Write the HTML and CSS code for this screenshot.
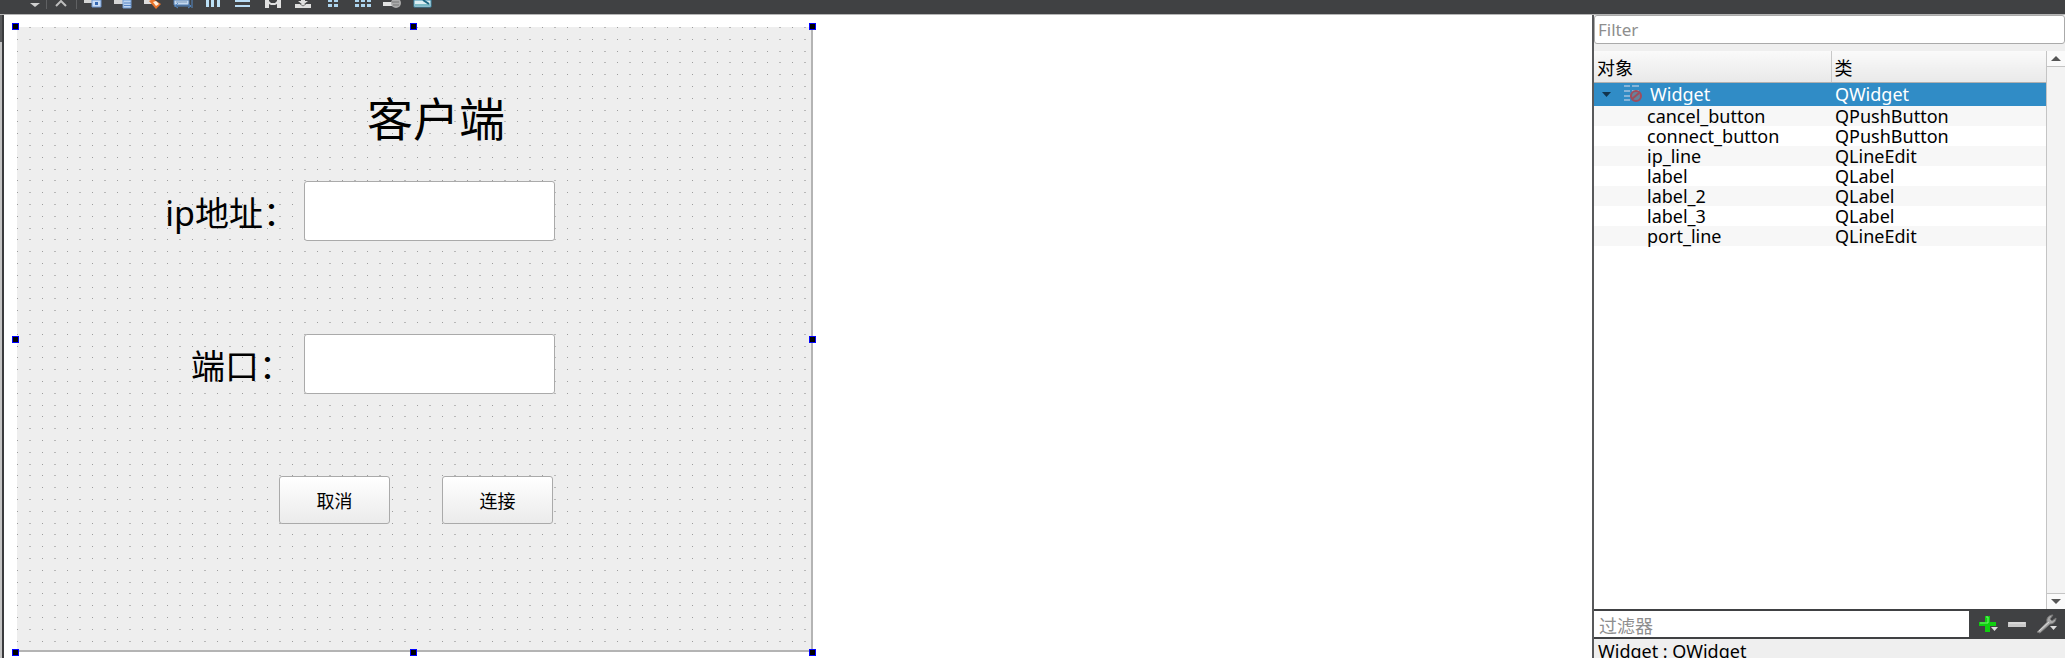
FILE: index.html
```html
<!DOCTYPE html>
<html lang="zh-CN">
<head>
<meta charset="utf-8">
<title>Widget</title>
<link rel="stylesheet" href="styles.css">
</head>
<body>
<header class="toolbar">
  <svg class="toolbar-icons" width="440" height="14" viewBox="0 0 440 14" aria-hidden="true">
    <path d="M30 3h10l-5 4z" fill="#d0d0d0"/>
    <path d="M46.500 0v9M76.500 0v9" stroke="#606163"/>
    <path d="M56 6l5-5 5 5" fill="none" stroke="#bdbdbd" stroke-width="2"/>
    <path d="M84 0h8v3h-8z" fill="#d5d5d5"/><path d="M92 0h9v7h-9z" fill="#c8dcf5" stroke="#6b93cd"/><path d="M95 2h3v3h-3z" fill="#3467b1"/>
    <path d="M114 0h9v4h-9z" fill="#d5d5d5"/><path d="M123 0h8v8h-8z" fill="#bdd4f0" stroke="#6f9bd4"/><path d="M124 3h7M124 5.500h7" stroke="#5684c4"/>
    <path d="M144 0h8v4h-8z" fill="#ddd"/><path d="M149 1l4-2 8 5-5 5z" fill="#e9742c"/><path d="M153 2l3-1 3 3-3 2z" fill="#fff0dd"/>
    <path d="M174 0h15v5h-15z" fill="#c5d9ef" stroke="#527eb2"/><path d="M176 2h11" stroke="#7a99bb"/><path d="M174 6h17M178 3l-3 3 3 2M188 4l3 2-3 2M192 0v8" stroke="#5489c4" fill="none" stroke-width="1"/>
    <path d="M206 0h3v7h-3zM211 0h3v7h-3zM217 0h3v7h-3z" fill="#bce0f5"/>
    <path d="M235 0h15v2h-15zM235 5h15v2h-15z" fill="#b9dcf5"/>
    <path d="M265 0h4v8h-4zM277 0h4v8h-4zM269 1l2 2h4l2-2v3l-2 1h-4l-2-1z" fill="#e1e1e1"/>
    <path d="M295 4h16v4h-16zM301 0h4v1h3l-5 4-5-4h3z" fill="#dedede"/><path d="M300 4l3 2 3-2" stroke="#777" fill="none"/>
    <path d="M328 0h4v2h-4zM334 0h4v2h-4zM328 4h4v3h-4zM334 4h4v3h-4zM355 0h4v2h-4zM361 0h4v2h-4zM367 0h4v2h-4zM355 4h4v3h-4zM361 4h4v3h-4zM367 4h4v3h-4z" fill="#add5ef"/>
    <path d="M383 2h9v4h-9z" fill="#e1e1e1"/><circle cx="396" cy="3" r="5" fill="#aaa"/><path d="M392 2h7M393 5h6" stroke="#777"/>
    <path d="M414 0h17v7h-17z" fill="#dceef2" stroke="#3c8baa"/><path d="M415 4h15v2h-15z" fill="#7dbbc6"/><path d="M423 0l6 4" stroke="#1d6682" stroke-width="2"/>
  </svg>
</header>
<div class="workspace">
  <main class="canvas">
    <form class="widget">
      <svg class="grid-dots" width="100%" height="100%" aria-hidden="true">
        <defs><pattern id="dots" width="25" height="59" patternUnits="userSpaceOnUse">
          <g fill="#9c9c9c">
            <path d="M0 0h1v1h-1zM0 12h1v1h-1zM0 24h1v1h-1zM0 35h1v1h-1zM0 47h1v1h-1z"/>
            <path fill="#b8b8b8" d="M12 0h2v1h-2zM12 12h2v1h-2zM12 24h2v1h-2zM12 35h2v1h-2zM12 47h2v1h-2z"/>
          </g>
        </pattern></defs>
        <rect width="100%" height="100%" fill="url(#dots)"/>
      </svg>
      <h1 class="title">客户端</h1>
      <div class="fields">
        <label class="field-label" for="ip_line">ip地址：</label>
        <input class="field" id="ip_line" type="text">
        <label class="field-label field-label-port" for="port_line">端口：</label>
        <input class="field" id="port_line" type="text">
      </div>
      <div class="actions">
        <button class="push-button" type="button">取消</button>
        <button class="push-button" type="button">连接</button>
      </div>
      <i class="handle top left"></i><i class="handle top center"></i><i class="handle top right"></i>
      <i class="handle middle left"></i><i class="handle middle right"></i>
      <i class="handle bottom left"></i><i class="handle bottom center"></i><i class="handle bottom right"></i>
    </form>
  </main>
  <aside class="inspector">
    <input class="filter" type="text" placeholder="Filter" aria-label="Filter">
    <div class="tree">
      <div class="tree-view">
        <table class="objects">
          <colgroup><col class="col-object"><col></colgroup>
          <thead><tr><th>对象</th><th>类</th></tr></thead>
          <tbody>
            <tr class="selected"><td><span class="root"><svg width="48" height="20" viewBox="0 0 48 20" aria-hidden="true"><path d="M8 8h9l-4.500 5z" fill="#12344d"/><path d="M30 2h6M38 2h7M30 7h6M38 7h7M30 12h6M30 16h6" stroke="#86b4d8" stroke-width="2"/><circle cx="42" cy="12" r="5" fill="#66839b" stroke="#a04c5c" stroke-width="2"/><path d="M38 15l7-6" stroke="#a04c5c" stroke-width="2"/></svg>Widget</span></td><td>QWidget</td></tr>
            <tr><td>cancel_button</td><td>QPushButton</td></tr>
            <tr><td>connect_button</td><td>QPushButton</td></tr>
            <tr><td>ip_line</td><td>QLineEdit</td></tr>
            <tr><td>label</td><td>QLabel</td></tr>
            <tr><td>label_2</td><td>QLabel</td></tr>
            <tr><td>label_3</td><td>QLabel</td></tr>
            <tr><td>port_line</td><td>QLineEdit</td></tr>
          </tbody>
        </table>
      </div>
      <div class="scrollbar">
        <button class="scroll-button" type="button" aria-label="Up"><svg width="10" height="5" viewBox="0 0 10 5"><path d="M0 5l5-5 5 5z" fill="#555"/></svg></button>
        <button class="scroll-button scroll-down" type="button" aria-label="Down"><svg width="10" height="5" viewBox="0 0 10 5"><path d="M0 0l5 5 5-5z" fill="#555"/></svg></button>
      </div>
    </div>
    <div class="property-bar">
      <input class="property-filter" type="text" placeholder="过滤器" aria-label="过滤器">
      <button class="tool" type="button" aria-label="Add"><svg width="20" height="20" viewBox="0 0 20 20"><path d="M7 2h5v6h6v4h-6v6H7v-6H1V8h6z" fill="#10cf10"/><path d="M8 3h2v6H2" fill="none" stroke="#74f474" stroke-width="1"/><path d="M13 13h7l-3.500 4z" fill="#ddd"/></svg></button>
      <button class="tool" type="button" aria-label="Remove"><svg width="20" height="20" viewBox="0 0 20 20"><path d="M1 8h18v5H1z" fill="#c9c9c9"/><path d="M2 9h16" stroke="#e6e6e6"/></svg></button>
      <button class="tool" type="button" aria-label="Configure"><svg width="22" height="20" viewBox="0 0 22 20"><path d="M1 18l10-10c-1-4 2-7 6-7l-3 4 2 2 4-3c0 4-3 6-6 6L4 19z" fill="#a9a9a9" stroke="#777"/><path d="M3 17l10-9" stroke="#ddd"/><path d="M14 12h7l-3.500 4z" fill="#ddd"/></svg></button>
    </div>
    <div class="property-title">Widget : QWidget</div>
  </aside>
</div>
</body>
</html>
```
FILE: styles.css
```css
* {
  box-sizing: border-box;
}

body {
  margin: 0;
  height: 100vh;
  display: flex;
  flex-direction: column;
  overflow: hidden;
  background: #fff;
  color: #000;
  font: 18px/20px "Noto Sans", "Noto Sans CJK SC", sans-serif;
}

input,
button {
  font: inherit;
  color: inherit;
  margin: 0;
}

svg {
  display: block;
}

.toolbar {
  flex: none;
  height: 15px;
  background: #404143;
  border-bottom: 1px solid #b5b5b5;
}

.workspace {
  flex: 1;
  min-height: 0;
  display: flex;
  padding-left: 2px;
  background: linear-gradient(#58595b 27px, #c4c4c4 27px);
}

.canvas {
  flex: 1;
  min-width: 0;
  border-left: 2px solid #3a3b3d;
  padding: 12px 13px 6px;
  background: #fff;
}

.widget {
  position: relative;
  width: 796px;
  height: 100%;
  padding-top: 59px;
  background: #eee;
  border: solid #b4b4b4;
  border-width: 0 2px 2px 0;
}

.grid-dots {
  position: absolute;
  inset: 0;
}

.title,
.fields,
.actions {
  position: relative;
}

.title {
  margin: 0 0 31px 350px;
  font-size: 46px;
  line-height: 64px;
  font-weight: 400;
}

.fields {
  display: grid;
  grid-template-columns: 280px 251px;
  column-gap: 7px;
  row-gap: 93px;
}

.field-label {
  padding-top: 4px;
  font-size: 34px;
  line-height: 56px;
  text-align: right;
}

.field-label-port {
  padding-right: 4px;
}

.field {
  width: 100%;
  height: 60px;
  padding: 0 8px;
  background: #fff;
  border: 1px solid #aaa;
  border-radius: 3px;
}

.actions {
  display: flex;
  gap: 52px;
  margin: 82px 0 0 262px;
}

.push-button {
  width: 111px;
  height: 48px;
  padding: 2px 0 0;
  background: linear-gradient(#fff, #ebebeb);
  border: 1px solid #aaa;
  border-radius: 3px;
}

.handle {
  position: absolute;
  width: 7px;
  height: 7px;
  background: #000;
  border: 1px solid #00f;
}

.top { top: -4px; }
.middle { top: calc(50% - 3px); }
.bottom { bottom: -6px; }
.left { left: -5px; }
.center { left: calc(50% - 4px); }
.right { right: -5px; }

.inspector {
  flex: none;
  width: 473px;
  display: flex;
  flex-direction: column;
  background: #efefef;
  border-left: 2px solid #58595b;
}

.filter {
  height: 29px;
  margin-bottom: 7px;
  padding: 0 3px;
  font-size: 17px;
  background: #fff;
  border: 1px solid #aaa;
  border-radius: 3px;
}

.filter::placeholder,
.property-filter::placeholder {
  color: #8e8e8e;
  opacity: 1;
}

.tree {
  flex: 1;
  min-height: 0;
  display: flex;
}

.tree-view {
  flex: 1;
  background: #fff;
}

.objects {
  width: 100%;
  table-layout: fixed;
  border-collapse: collapse;
}

.col-object {
  width: 237px;
}

.objects th {
  height: 31px;
  padding: 4px 3px 0;
  font-weight: 400;
  text-align: left;
  background: linear-gradient(#fafafa, #e9e9e9);
  border-bottom: 1px solid #b0b0b0;
}

.objects th + th {
  border-left: 1px solid #c8c8c8;
}

.objects td {
  height: 20px;
  padding: 0 0 0 4px;
  white-space: nowrap;
}

.objects td:first-child {
  padding-left: 53px;
}

.objects tr:nth-child(even) {
  background: #f7f7f7;
}

.objects .selected {
  background: #308cc6;
  color: #fff;
}

.objects .selected td {
  height: 24px;
}

.objects .selected td:first-child {
  padding-left: 0;
}

.root {
  display: flex;
  gap: 8px;
}

.scrollbar {
  width: 19px;
  display: flex;
  flex-direction: column;
  justify-content: space-between;
  background: #f3f3f3;
  border-left: 1px solid #c4c4c4;
}

.scroll-button {
  display: grid;
  place-items: center;
  height: 16px;
  padding: 0;
  background: #fafafa;
  border: 0;
  border-bottom: 1px solid #c4c4c4;
}

.scroll-down {
  border-top: 1px solid #c4c4c4;
  border-bottom: 0;
}

.property-bar {
  flex: none;
  display: flex;
  align-items: center;
  gap: 9px;
  height: 30px;
  padding-right: 7px;
  background: #404143;
}

.property-filter {
  flex: 1;
  min-width: 0;
  height: 26px;
  padding: 4px 5px 0;
  background: #fff;
  border: 0;
}

.tool {
  padding: 0;
  background: none;
  border: 0;
}

.property-title {
  flex: none;
  height: 19px;
  padding: 0 4px;
  overflow: hidden;
  line-height: 24px;
}
```
